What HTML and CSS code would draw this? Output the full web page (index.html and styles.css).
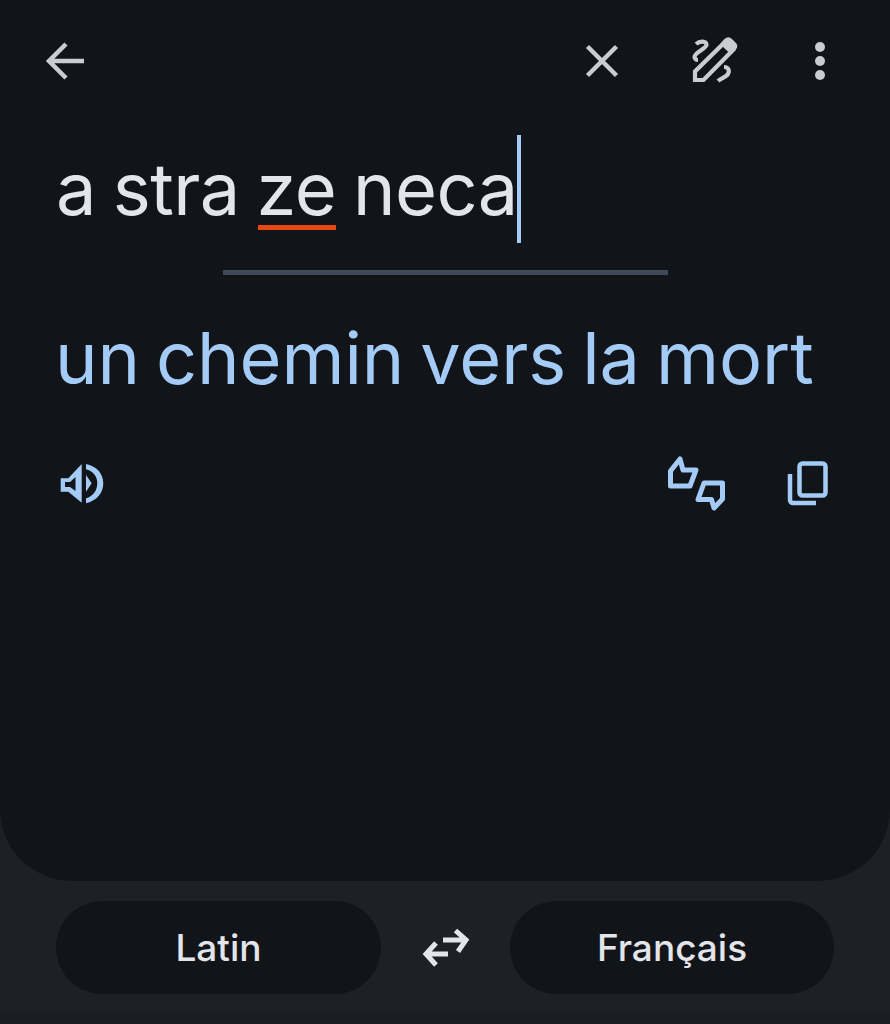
FILE: index.html
```html
<!DOCTYPE html>
<html lang="en">
    <head>
        <meta charset="UTF-8">
        <meta name="viewport" content="width=device-width, initial-scale=1.0">
        <title>Translate</title>
        <link rel="stylesheet" href="styles.css">
    </head>
    <body>
        <div class="panel">
            <div class="top-bar">
                <svg class="icon" viewBox="0 0 48 48" fill="none" stroke="#c9ccd3" stroke-width="4.500">
                    <path d="M43 24H9M25 7 8 24 25 41"/>
                </svg>
                <div class="top-actions">
                    <svg class="icon close-icon" viewBox="0 0 48 48" fill="none" stroke="#c9ccd3" stroke-width="4.500">
                        <path d="M9.500 9.500l29 29M38.500 9.500l-29 29"/>
                    </svg>
                    <svg class="icon" viewBox="0 0 48 48" fill="none" stroke="#c9ccd3" stroke-width="4.200">
                        <path d="M5 7C9 3.500 15 4 15.500 7.500 16 11.500 3.500 15 3.500 20 3.800 22 5 23 7 23"/>
                        <path d="M4 43V34.500L34 5l8 8L12.500 43Z"/>
                        <path d="M32 7l3-3.500c1.500-1.500 3-1.500 4.500 0l3.500 3.500c1.500 1.500 1.500 3 0 4.500l-3 3Z" fill="#c9ccd3"/>
                        <path d="M33 30C37 30 39 33 37 37 35.500 40 30 41 27 44"/>
                    </svg>
                    <svg class="icon" viewBox="0 0 48 48" fill="#c9ccd3">
                        <circle cx="24" cy="10" r="5"/>
                        <circle cx="24" cy="24" r="5"/>
                        <circle cx="24" cy="38" r="5"/>
                    </svg>
                </div>
            </div>

            <div class="source-row">
                <span class="source-text">a stra <span class="misspelled">ze</span> neca</span>
                <span class="caret"></span>
            </div>
            <div class="divider"></div>

            <div class="translation">un chemin vers la mort</div>

            <div class="result-actions">
                <svg class="icon" viewBox="0 0 48 48" fill="#a3cbf5">
                    <path fill-rule="evenodd" d="M2.700 18.300H10.300L23.700 4V42.700L10.300 31.700H2.700ZM7 22V27H12L17.500 31V17L12 22Z"/>
                    <path d="M28 15 33.700 23.300 28 31.700Z"/>
                    <path d="M28 4C38 6 45.300 13 45.300 23.300S38 41 28 43.300V38.300C34.500 36.500 39.300 31 39.300 23.300S34.500 11 28 9.300Z"/>
                </svg>
                <div class="result-right">
                    <svg class="icon-wide" viewBox="0 0 64 64" fill="none" stroke="#a3cbf5" stroke-width="5" stroke-linejoin="round">
                        <path d="M15 7 18 18 31 18 25 34H5.500V19Z"/>
                        <path d="M57.500 31V47L49 56 46.500 47.500H33L39 31Z"/>
                    </svg>
                    <svg class="icon" viewBox="0 0 48 48" fill="none" stroke="#a3cbf5" stroke-width="4.500">
                        <rect x="15.500" y="3.500" width="26" height="32" rx="3"/>
                        <path d="M6 14V40a3 3 0 0 0 3 3H32"/>
                    </svg>
                </div>
            </div>
        </div>

        <div class="lang-bar">
            <button class="lang-btn">Latin</button>
            <svg class="icon swap-icon" viewBox="0 0 48 48" fill="none" stroke="#e3e5ea" stroke-width="5">
                <path d="M21 16H44M33.500 6.500 44 16 36 27.500"/>
                <path d="M26 30H5M14 19 4 30 14 41"/>
            </svg>
            <button class="lang-btn">Français</button>
        </div>
        <div class="bottom-strip"></div>
    </body>
</html>
```

FILE: styles.css
```css
html, body {
    margin: 0;
    padding: 0;
}
body {
    width: 890px;
    height: 1024px;
    overflow: hidden;
    background-color: #1d2024;
    font-family: "Inter", "Noto Sans", sans-serif;
}
.panel {
    height: 881px;
    box-sizing: border-box;
    padding-top: 37px;
    background-color: #11151a;
    border-radius: 0 0 72px 72px;
}
.icon {
    display: block;
    width: 48px;
    height: 48px;
    flex: none;
}
.icon-wide {
    display: block;
    width: 64px;
    height: 64px;
    flex: none;
}
.top-bar {
    display: flex;
    justify-content: space-between;
    padding: 0 46px 0 41px;
}
.top-actions {
    display: flex;
    gap: 57px;
}
.close-icon {
    margin-right: 8px;
}
.source-row {
    display: flex;
    align-items: center;
    height: 108px;
    margin-top: 50px;
    padding-left: 56px;
}
.source-text {
    font-size: 72px;
    line-height: 108px;
    letter-spacing: -0.5px;
    word-spacing: -3px;
    color: #e3e5ea;
    white-space: pre;
}
.misspelled {
    position: relative;
}
.misspelled::after {
    content: "";
    position: absolute;
    left: 1px;
    right: 0;
    bottom: 2px;
    height: 5px;
    background-color: #e8470f;
}
.caret {
    width: 4px;
    height: 108px;
    margin-left: -1px;
    background-color: #a3cbf5;
}
.divider {
    width: 445px;
    height: 5px;
    margin: 27px auto 0;
    background-color: #3f4a59;
}
.translation {
    margin-top: 38px;
    padding-left: 55px;
    font-size: 72px;
    line-height: 90px;
    letter-spacing: -0.1px;
    word-spacing: -4px;
    color: #a3cbf5;
    white-space: nowrap;
}
.result-actions {
    display: flex;
    justify-content: space-between;
    align-items: center;
    margin-top: 49px;
    padding: 0 58px;
}
.result-right {
    display: flex;
    align-items: center;
    gap: 55px;
}
.lang-bar {
    display: flex;
    align-items: center;
    gap: 40px;
    padding: 20px 0 0 56px;
}
.swap-icon {
    margin-left: 1px;
}
.lang-btn {
    width: 324px;
    height: 93px;
    padding: 0;
    border: none;
    border-radius: 47px;
    background-color: #11151a;
    color: #e3e5ea;
    font-family: inherit;
    font-size: 37px;
    font-weight: 500;
}
.lang-btn:first-child {
    width: 325px;
}
.bottom-strip {
    height: 12px;
    margin-top: 18px;
    background-color: #1a1d21;
}
```
